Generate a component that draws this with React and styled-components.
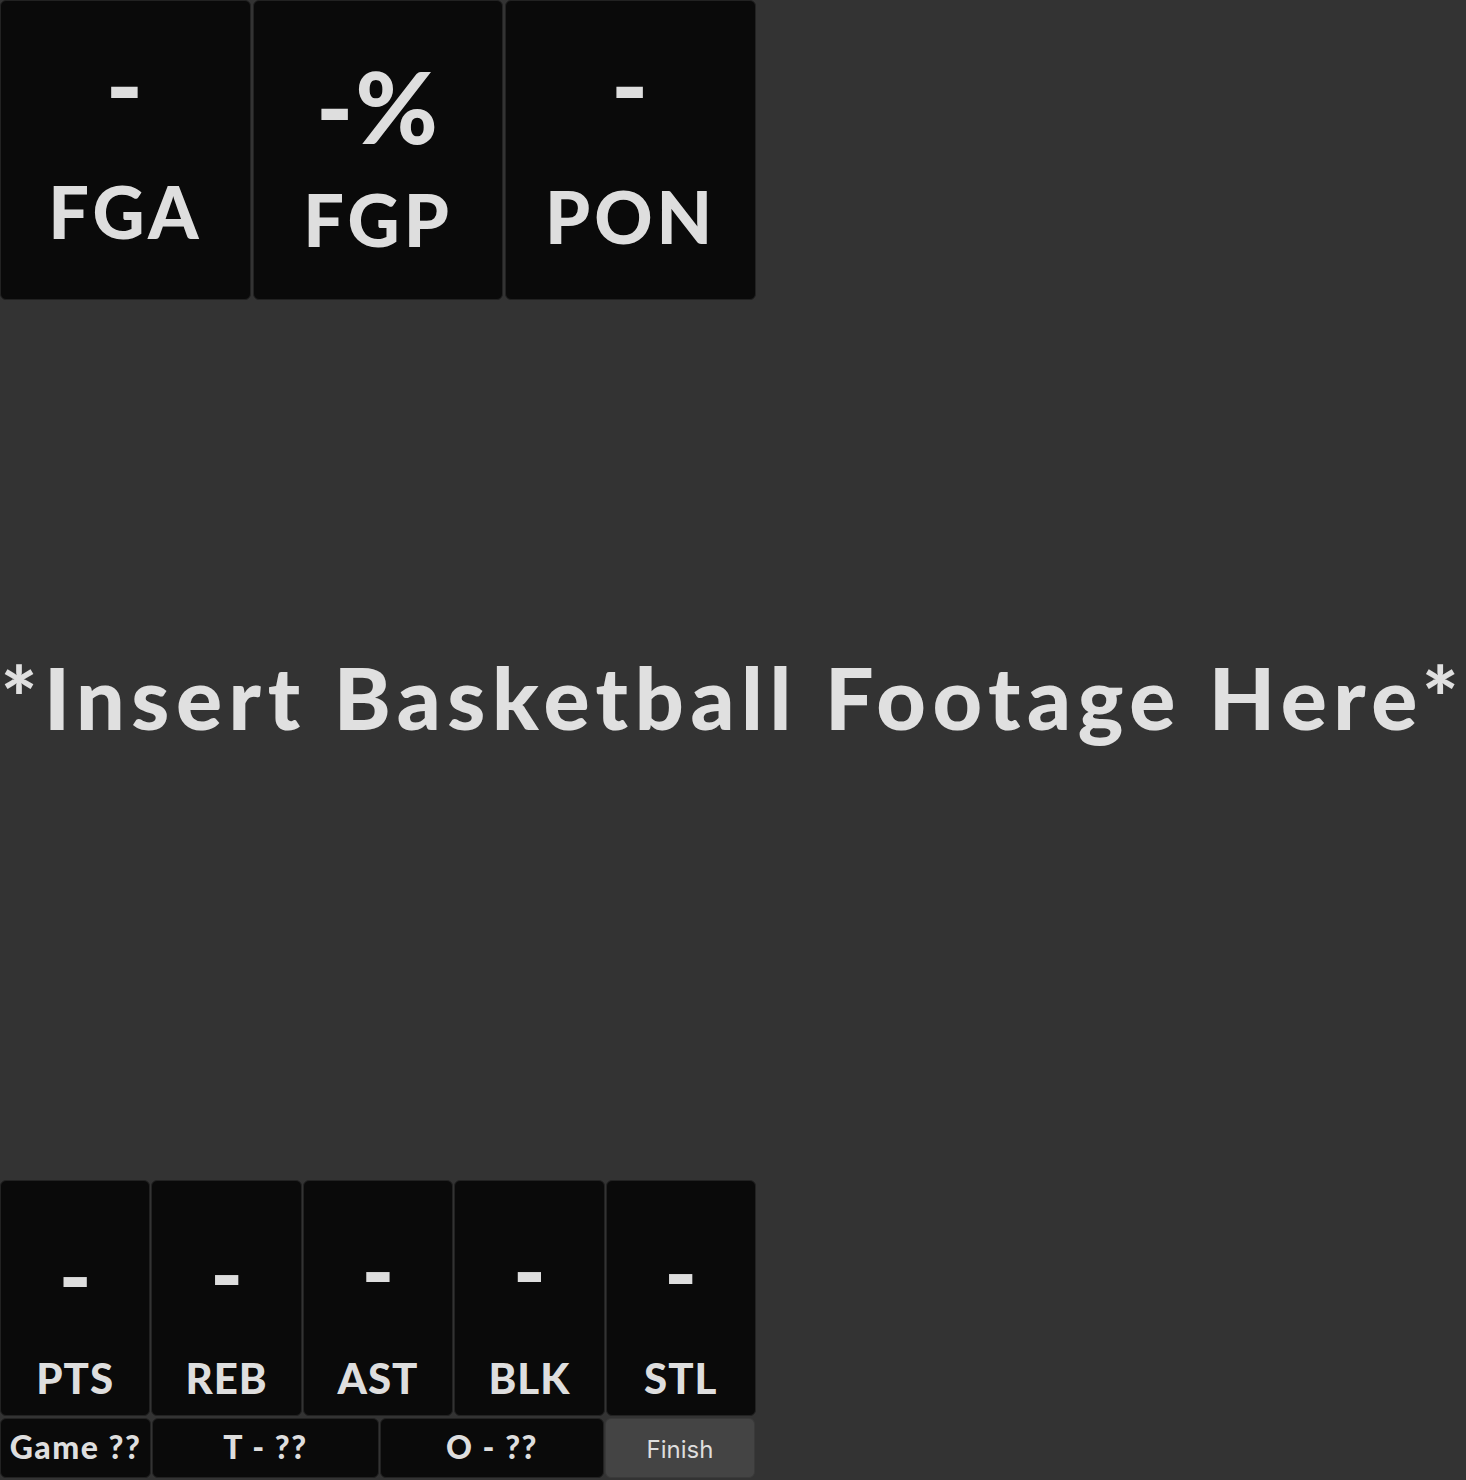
import React from "react";
import styled, { createGlobalStyle } from "styled-components";

const GlobalStyle = createGlobalStyle`
  html, body {
    margin: 0;
    padding: 0;
    background: #333333;
  }
  body {
    font-family: "Lato", "Inter", sans-serif;
    color: #dedede;
  }
`;

const Page = styled.div`
  height: 100vh;
  display: flex;
  flex-direction: column;
`;

const TopRow = styled.div`
  width: 756px;
  height: 300px;
  display: grid;
  grid-template-columns: repeat(3, 1fr);
  gap: 2px;
`;

const Card = styled.div`
  background: #0a0a0a;
  border: 1px solid #222;
  border-radius: 6px;
  display: flex;
  flex-direction: column;
  align-items: center;
  box-sizing: border-box;
`;

const BigValue = styled.div`
  font-weight: 900;
  font-size: 100px;
  line-height: 1;
  letter-spacing: 2px;
  margin-top: ${(p) => p.$top}px;
`;

const BigLabel = styled.div`
  font-weight: 900;
  font-size: 72px;
  line-height: 1;
  letter-spacing: 4px;
  margin-top: ${(p) => p.$gap}px;
`;

const Middle = styled.div`
  flex: 1;
  display: flex;
  align-items: center;
  justify-content: center;
  padding-bottom: 88px;
`;

const Footage = styled.h1`
  margin: 0;
  font-weight: 900;
  font-size: 86px;
  letter-spacing: 6.6px;
  white-space: nowrap;
  color: #e0e0e0;
`;

const Bottom = styled.div`
  width: 756px;
  display: flex;
  flex-direction: column;
  gap: 2px;
  padding-bottom: 2px;
`;

const StatRow = styled.div`
  height: 236px;
  display: grid;
  grid-template-columns: repeat(5, 1fr);
  gap: 1px;
`;

const SmallValue = styled.div`
  font-weight: 900;
  font-size: 88px;
  line-height: 1;
  margin-top: ${(p) => p.$top}px;
`;

const SmallLabel = styled.div`
  font-weight: 900;
  font-size: 42px;
  line-height: 1;
  letter-spacing: 1px;
  margin-top: auto;
  margin-bottom: 16px;
`;

const Bar = styled.div`
  height: 60px;
  display: grid;
  grid-template-columns: 151px 227px 224px 150px;
  gap: 1px;
`;

const BarCell = styled.div`
  background: #0a0a0a;
  border: 1px solid #222;
  border-radius: 6px;
  display: flex;
  align-items: center;
  justify-content: center;
  padding-bottom: 3px;
  font-weight: 900;
  font-size: 32px;
  letter-spacing: 1.5px;
  white-space: nowrap;
  box-sizing: border-box;
`;

const FinishButton = styled.button`
  background: #444;
  border: 1px solid #3a3a3a;
  border-radius: 6px;
  color: #dedede;
  font-family: "Inter", "Roboto", sans-serif;
  font-size: 24px;
  font-weight: 400;
  padding-top: 4px;
`;

const topStats = [
  { value: "-", label: "FGA", top: 32, gap: 42 },
  { value: "-%", label: "FGP", top: 54, gap: 28 },
  { value: "-", label: "PON", top: 32, gap: 47 },
];

const bottomStats = [
  { label: "PTS", top: 50 },
  { label: "REB", top: 48 },
  { label: "AST", top: 45 },
  { label: "BLK", top: 45 },
  { label: "STL", top: 47 },
];

export default function App() {
  return (
    <>
      <GlobalStyle />
      <Page>
        <TopRow>
          {topStats.map((s) => (
            <Card key={s.label}>
              <BigValue $top={s.top}>{s.value}</BigValue>
              <BigLabel $gap={s.gap}>{s.label}</BigLabel>
            </Card>
          ))}
        </TopRow>
        <Middle>
          <Footage>*Insert Basketball Footage Here*</Footage>
        </Middle>
        <Bottom>
          <StatRow>
            {bottomStats.map((s) => (
              <Card key={s.label}>
                <SmallValue $top={s.top}>-</SmallValue>
                <SmallLabel>{s.label}</SmallLabel>
              </Card>
            ))}
          </StatRow>
          <Bar>
            <BarCell>Game ??</BarCell>
            <BarCell>T - ??</BarCell>
            <BarCell>O - ??</BarCell>
            <FinishButton>Finish</FinishButton>
          </Bar>
        </Bottom>
      </Page>
    </>
  );
}
